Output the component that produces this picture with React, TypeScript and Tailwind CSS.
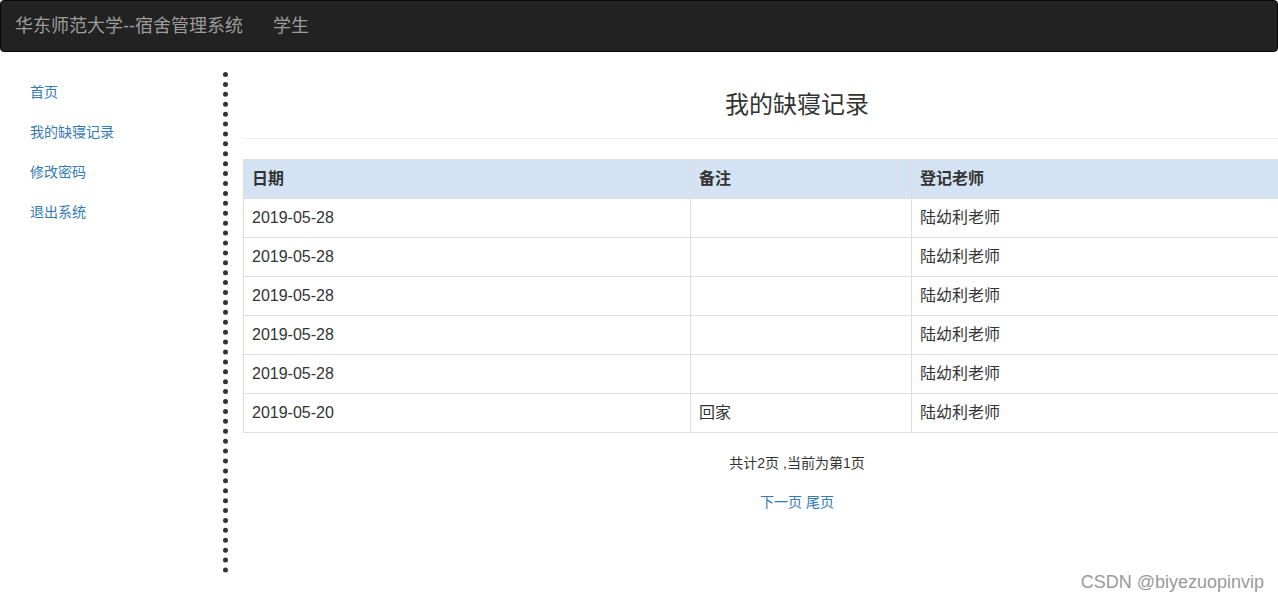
import React from 'react'

const font = { fontFamily: '"Liberation Sans", "Noto Sans CJK SC", sans-serif' }

const records = [
  { date: '2019-05-28', note: '', teacher: '陆幼利老师' },
  { date: '2019-05-28', note: '', teacher: '陆幼利老师' },
  { date: '2019-05-28', note: '', teacher: '陆幼利老师' },
  { date: '2019-05-28', note: '', teacher: '陆幼利老师' },
  { date: '2019-05-28', note: '', teacher: '陆幼利老师' },
  { date: '2019-05-20', note: '回家', teacher: '陆幼利老师' },
]

const menu = ['首页', '我的缺寝记录', '修改密码', '退出系统']

const App: React.FC = () => {
  return (
    <div className="relative w-[1278px] h-[601px] overflow-hidden bg-white text-[#333]" style={font}>
      {/* Navbar */}
      <div className="h-[52px] bg-[#222] border border-[#080808] rounded-[4px] flex items-center text-[18px] text-[#9d9d9d]">
        <span className="ml-[14px]">华东师范大学--宿舍管理系统</span>
        <span className="ml-[30px]">学生</span>
      </div>

      <div className="flex">
        {/* Sidebar */}
        <div className="mt-5 w-[228px] h-[501px] shrink-0 border-r-[5px] border-dotted border-[#333]">
          <ul className="pl-[30px]">
            {menu.map((m) => (
              <li key={m} className="py-[10px] text-[14px] leading-[20px] text-[#337ab7]">
                {m}
              </li>
            ))}
          </ul>
        </div>

        {/* Main */}
        <div className="ml-[15px] w-[1108px] shrink-0">
          <div className="mt-[40px] pb-[20px] border-b border-[#eee] text-center text-[24px] leading-[26px]">
            我的缺寝记录
          </div>

          <table className="mt-[20px] w-full border-collapse text-[16px]">
            <thead>
              <tr className="bg-[#d4e3f3]">
                <th className="h-[39px] w-[447px] px-2 text-left font-bold border border-[#ddd]">日期</th>
                <th className="h-[39px] w-[221px] px-2 text-left font-bold border border-[#ddd]">备注</th>
                <th className="h-[39px] px-2 text-left font-bold border border-[#ddd]">登记老师</th>
              </tr>
            </thead>
            <tbody>
              {records.map((r, i) => (
                <tr key={i}>
                  <td className="h-[39px] px-2 border border-[#ddd]">{r.date}</td>
                  <td className="h-[39px] px-2 border border-[#ddd]">{r.note}</td>
                  <td className="h-[39px] px-2 border border-[#ddd]">{r.teacher}</td>
                </tr>
              ))}
            </tbody>
          </table>

          <div className="mt-[22px] text-center text-[14px] leading-[16px]">共计2页 ,当前为第1页</div>
          <div className="mt-[21px] text-center text-[14px] leading-[20px] text-[#337ab7]">下一页 尾页</div>
        </div>
      </div>

      <div className="absolute right-[14px] top-[571px] text-[18px] leading-[22px] text-[#999]">
        CSDN @biyezuopinvip
      </div>
    </div>
  )
}

export default App
